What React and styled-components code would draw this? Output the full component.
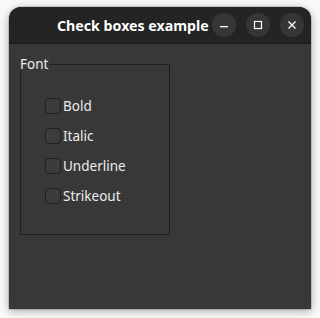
import React from 'react';
import styled, { createGlobalStyle } from 'styled-components';

const GlobalStyle = createGlobalStyle`
  html, body {
    margin: 0;
    padding: 0;
    background: #ffffff;
  }
  * {
    box-sizing: border-box;
  }
`;

const Desktop = styled.div`
  width: 320px;
  height: 318px;
  padding: 7px 9px 9px 9px;
  background: #fafafa;
  font-family: 'Noto Sans', 'DejaVu Sans', sans-serif;
`;

const Window = styled.div`
  width: 302px;
  height: 302px;
  display: flex;
  flex-direction: column;
  background: #383838;
  border-radius: 12px 12px 0 0;
  overflow: hidden;
  box-shadow: 0 2px 10px rgba(0, 0, 0, 0.35), 0 0 0 1px rgba(0, 0, 0, 0.12);
`;

const TitleBar = styled.div`
  height: 37px;
  flex-shrink: 0;
  display: flex;
  align-items: center;
  background: #242424;
  border-bottom: 1px solid #1c1c1c;
  padding: 0 7px 0 48px;
`;

const Title = styled.div`
  flex: 1;
  color: #ffffff;
  font-size: 14.2px;
  font-weight: 700;
  white-space: nowrap;
`;

const Controls = styled.div`
  display: flex;
  gap: 10px;
`;

const ControlButton = styled.div`
  width: 24px;
  height: 24px;
  border-radius: 50%;
  background: #363636;
  display: flex;
  align-items: center;
  justify-content: center;
`;

const Body = styled.div`
  flex: 1;
  padding: 20px 0 0 11px;
`;

const GroupBox = styled.div`
  position: relative;
  width: 150px;
  height: 171px;
  border: 1px solid #1f1f1f;
  padding: 33px 0 0 24px;
  display: flex;
  flex-direction: column;
  gap: 15px;
`;

const GroupTitle = styled.span`
  position: absolute;
  left: -1px;
  top: -8px;
  padding-right: 1px;
  background: #383838;
  color: #ececec;
  font-size: 13.5px;
  line-height: 14px;
`;

const CheckRow = styled.label`
  display: flex;
  align-items: center;
  gap: 2px;
  height: 15px;
  color: #ececec;
  font-size: 13.5px;
`;

const Box = styled.span`
  width: 16px;
  height: 16px;
  border: 1px solid #202020;
  border-radius: 4px;
  background: #3c3c3c;
  flex-shrink: 0;
`;

const options = ['Bold', 'Italic', 'Underline', 'Strikeout'];

export default function App() {
  return (
    <>
      <GlobalStyle />
      <Desktop>
        <Window>
          <TitleBar>
            <Title>Check boxes example</Title>
            <Controls>
              <ControlButton>
                <svg width="10" height="10" viewBox="0 0 10 10">
                  <rect x="1" y="6" width="8" height="1.3" fill="#fff" />
                </svg>
              </ControlButton>
              <ControlButton>
                <svg width="10" height="10" viewBox="0 0 10 10">
                  <rect x="1.5" y="1.5" width="7" height="7" fill="none" stroke="#fff" strokeWidth="1.2" />
                </svg>
              </ControlButton>
              <ControlButton>
                <svg width="10" height="10" viewBox="0 0 10 10">
                  <path d="M1.5 1.5 L8.5 8.5 M8.5 1.5 L1.5 8.5" stroke="#fff" strokeWidth="1.3" />
                </svg>
              </ControlButton>
            </Controls>
          </TitleBar>
          <Body>
            <GroupBox>
              <GroupTitle>Font</GroupTitle>
              {options.map((o) => (
                <CheckRow key={o}>
                  <Box />
                  {o}
                </CheckRow>
              ))}
            </GroupBox>
          </Body>
        </Window>
      </Desktop>
    </>
  );
}
